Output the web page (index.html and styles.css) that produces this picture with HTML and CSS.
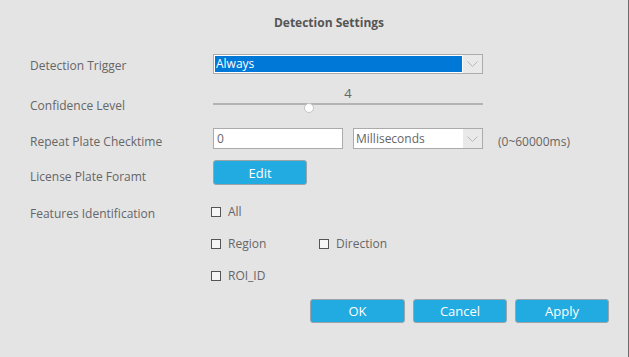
FILE: index.html
```html
<!DOCTYPE html>
<html lang="en">
<head>
    <meta charset="UTF-8">
    <title>Detection Settings</title>
    <link rel="stylesheet" href="styles.css">
</head>
<body>
    <div class="dialog">
        <div class="title">Detection Settings</div>

        <div class="form">
            <div class="row row-trigger">
                <div class="label">Detection Trigger</div>
                <div class="select select-active">
                    <span class="select-value">Always</span>
                    <span class="select-arrow">
                        <svg width="11" height="6" viewBox="0 0 11 6"><path d="M0.5 0.5 L5.5 5.5 L10.5 0.5" fill="none" stroke="#b8b8b8" stroke-width="1"/></svg>
                    </span>
                </div>
            </div>

            <div class="row row-slider">
                <div class="label">Confidence Level</div>
                <div class="slider">
                    <div class="slider-value">4</div>
                    <div class="slider-bar">
                        <div class="slider-track"></div>
                        <span class="slider-thumb"></span>
                    </div>
                </div>
            </div>

            <div class="row row-time">
                <div class="label">Repeat Plate Checktime</div>
                <div class="input">0</div>
                <div class="select select-unit">
                    <span class="select-value">Milliseconds</span>
                    <span class="select-arrow">
                        <svg width="11" height="6" viewBox="0 0 11 6"><path d="M0.5 0.5 L5.5 5.5 L10.5 0.5" fill="none" stroke="#b8b8b8" stroke-width="1"/></svg>
                    </span>
                </div>
                <div class="hint">(0~60000ms)</div>
            </div>

            <div class="row row-edit">
                <div class="label">License Plate Foramt</div>
                <button type="button" class="btn btn-edit">Edit</button>
            </div>

            <div class="row row-check row-first">
                <div class="label">Features Identification</div>
                <label class="check"><span class="box"></span>All</label>
            </div>
            <div class="row row-check">
                <div class="label"></div>
                <label class="check"><span class="box"></span>Region</label>
                <label class="check"><span class="box"></span>Direction</label>
            </div>
            <div class="row row-check">
                <div class="label"></div>
                <label class="check"><span class="box"></span>ROI_ID</label>
            </div>
        </div> <!-- form end -->

        <div class="actions">
            <button type="button" class="btn btn-ok">OK</button>
            <button type="button" class="btn">Cancel</button>
            <button type="button" class="btn">Apply</button>
        </div>
    </div>
</body>
</html>
```

FILE: styles.css
```css
body {
    margin: 0;
    background-color: #e4e4e4;
}

body * {
    font-family: "Open Sans", "Noto Sans", sans-serif;
}

div.dialog {
    width: 628px;
    height: 357px;
    border-right: 1px solid #6b6b6b;
    background-color: #e4e4e4;
    color: #666;
    font-size: 12px;
}

div.dialog div.title {
    height: 54px;
    line-height: 46px;
    text-align: center;
    font-weight: bold;
    color: #555;
    padding-left: 30px;
}

div.form {
    padding-left: 30px;
}

div.form div.row {
    display: flex;
    align-items: flex-start;
}

div.form div.label {
    width: 183px;
    flex-shrink: 0;
    line-height: 16px;
    white-space: nowrap;
}

/* detection trigger */
div.row-trigger {
    height: 20px;
}

div.row-trigger div.label {
    margin-top: 4px;
}

div.select {
    display: flex;
    box-sizing: border-box;
    border: 1px solid #ababab;
    background-color: #fff;
}

div.select span.select-value {
    flex: 1;
    padding-left: 2px;
    line-height: 17px;
}

div.select span.select-arrow {
    width: 19px;
    display: flex;
    align-items: center;
    justify-content: center;
    background-color: #e9e9e9;
}

div.select-active {
    width: 270px;
    height: 20px;
}

div.select-active span.select-value {
    margin: 1px;
    padding-left: 1px;
    background-color: #0078d7;
    color: #fff;
    line-height: 16px;
}

/* slider */
div.row-slider {
    height: 22px;
    margin-top: 13px;
}

div.row-slider div.label {
    margin-top: 11px;
}

div.slider {
    width: 270px;
}

div.slider div.slider-value {
    height: 12px;
    line-height: 12px;
    text-align: center;
    font-size: 13px;
}

div.slider div.slider-bar {
    position: relative;
    height: 10px;
}

div.slider div.slider-track {
    margin-top: 4px;
    height: 2px;
    background-color: #b3b3b3;
}

div.slider span.slider-thumb {
    position: absolute;
    left: 91px;
    top: 0;
    width: 10px;
    height: 10px;
    box-sizing: border-box;
    border: 1px solid #c4c4c4;
    border-radius: 50%;
    background-color: #fff;
}

/* checktime */
div.row-time {
    height: 21px;
    margin-top: 19px;
}

div.row-time div.label {
    margin-top: 6px;
}

div.input {
    width: 130px;
    height: 21px;
    box-sizing: border-box;
    border: 1px solid #ababab;
    background-color: #fff;
    padding-left: 3px;
    line-height: 19px;
}

div.select-unit {
    width: 130px;
    height: 21px;
    margin-left: 10px;
}

div.select-unit span.select-value {
    line-height: 19px;
}

div.hint {
    margin-left: 15px;
    line-height: 16px;
    margin-top: 6px;
}

/* edit */
div.row-edit {
    height: 25px;
    margin-top: 11px;
}

div.row-edit div.label {
    margin-top: 9px;
}

.btn {
    width: 94px;
    height: 24px;
    padding: 0;
    border: 1px solid #9aa3a8;
    border-radius: 3px;
    background-color: #22abe0;
    color: #fff;
    font-size: 13px;
    cursor: pointer;
}

.btn-ok {
    width: 95px;
}

.btn-edit {
    width: 94px;
    height: 25px;
}

/* checkboxes */
div.row-check {
    height: 16px;
    margin-top: 16px;
}

div.row-check.row-first {
    margin-top: 19px;
}

div.row-check div.label {
    width: 181px;
    margin-top: 2px;
}

label.check {
    display: flex;
    align-items: center;
    min-width: 108px;
    line-height: 16px;
}

label.check span.box {
    width: 10px;
    height: 10px;
    box-sizing: border-box;
    border: 1px solid #555;
    background-color: #f6f6f6;
    margin-right: 7px;
}

/* bottom buttons */
div.actions {
    display: flex;
    justify-content: flex-end;
    gap: 8px;
    margin-top: 15px;
    padding-right: 19px;
}
```
